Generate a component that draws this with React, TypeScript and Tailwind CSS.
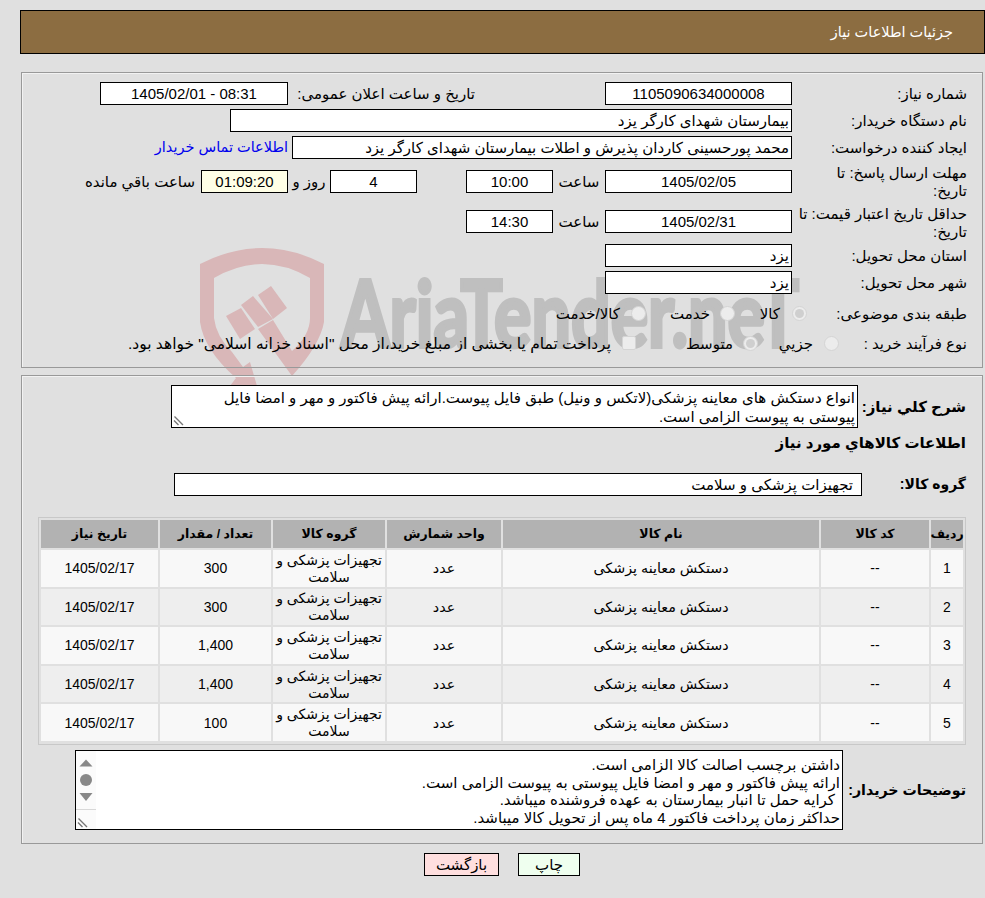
const inputBox = "h-[23px] border border-black bg-white px-2 flex items-center shrink-0";
const cell = "flex items-center justify-center pt-[1px]";

const items = [
  { id: 1, qty: "300" },
  { id: 2, qty: "300" },
  { id: 3, qty: "1,400" },
  { id: 4, qty: "1,400" },
  { id: 5, qty: "100" },
];

const headers = ["ردیف", "کد کالا", "نام کالا", "واحد شمارش", "گروه کالا", "تعداد / مقدار", "تاریخ نیاز"];

const Radio = ({ checked }: { checked?: boolean }) => (
  <span className="w-[15px] h-[15px] rounded-full bg-[#ececec] border border-[#d4d4d4] flex items-center justify-center shrink-0">
    {checked && <span className="w-[9px] h-[9px] rounded-full bg-[#cfcfcf]" />}
  </span>
);

const Watermark = () => (
  <svg dir="ltr" className="absolute left-[190px] top-[240px] pointer-events-none" width="620" height="150" viewBox="190 240 620 150">
    <g fill="#d9b7b8">
      <path d="M200 264 Q262 232 324 264 L324 322 Q320 345 292 376 L258 329 L273 320 L292 351 Q310 335 310 318 L310 278 Q262 250 214 278 L214 318 Q216 336 232 352 L243 367 L250 362 L257 386 L230 386 L236 378 Q204 350 200 322 Z" />
      <path d="M226 316 L241 308 L255 329 L240 339 Z" />
      <path d="M241 305 L253 296 L273 319 L258 327 Z" />
      <path d="M258 295 L271 286 L287 308 L273 319 Z" />
    </g>
    <text x="341" y="347" fontFamily="Lato" fontWeight="700" fontSize="92" fill="#bfbfbf" stroke="#bfbfbf" strokeWidth="4" textAnchor="start" direction="ltr" textLength="458" lengthAdjust="spacingAndGlyphs">
      AriaTender.neT
    </text>
  </svg>
);

const ResizeGrip = () => (
  <svg className="absolute left-[1px] bottom-[1px]" width="11" height="11" viewBox="0 0 11 11" stroke="#777" fill="none">
    <path d="M1.5 1.5 L10 10 M1 5.5 L5.5 10" strokeWidth="1.4" />
  </svg>
);

export default function App() {
  return (
    <div dir="rtl" className="relative min-h-[898px] w-[985px] overflow-hidden bg-[#e0e0e0] font-['Liberation_Sans','DejaVu_Sans',sans-serif] text-[15px] leading-[17px] text-black">
      <Watermark />

      {/* Header */}
      <div className="relative pt-[10px] pl-[20px]">
        <div className="h-[44px] border border-black bg-[#8c6d41] text-white text-[14.5px] flex items-center pr-[31px]">جزئیات اطلاعات نیاز</div>
      </div>

      {/* Main info */}
      <div className="relative mt-[18px] mr-[2px] ml-[21px] h-[296px] border border-[#999] shadow-[inset_1px_1px_0_#f2f2f2] pt-[9px] pr-[15px]">
        <div className="flex h-[27px]">
          <label className="w-[175px] pt-[3px]">شماره نیاز:</label>
          <div className={`${inputBox} w-[187px] justify-center`}>1105090634000008</div>
          <label className="w-[317px] pr-[130px] pt-[3px] shrink-0 whitespace-nowrap">تاریخ و ساعت اعلان عمومی:</label>
          <div dir="ltr" className={`${inputBox} w-[188px] justify-center`}>1405/02/01 - 08:31</div>
        </div>
        <div className="flex h-[27px]">
          <label className="w-[175px] pt-[3px]">نام دستگاه خریدار:</label>
          <div className={`${inputBox} w-[562px] !pr-[2px]`}>بیمارستان شهدای کارگر یزد</div>
        </div>
        <div className="flex h-[34px]">
          <label className="w-[175px] pt-[3px]">ایجاد کننده درخواست:</label>
          <div className={`${inputBox} w-[500px] !pr-[2px]`}>محمد پورحسینی کاردان پذیرش و اطلات بیمارستان شهدای کارگر یزد</div>
          <a className="mr-[4px] pt-[3px] text-[14.5px] text-[#0000ee]">اطلاعات تماس خریدار</a>
        </div>
        <div className="flex h-[40px]">
          <label className="w-[175px] leading-[18px] -mt-[6px] whitespace-nowrap">مهلت ارسال پاسخ: تا<br />تاریخ:</label>
          <div className={`${inputBox} w-[187px] justify-center`}>1405/02/05</div>
          <span className="w-[52px] text-center pt-[3px]">ساعت</span>
          <div className={`${inputBox} w-[87px] justify-center`}>10:00</div>
          <span className="w-[49px]" />
          <div className={`${inputBox} w-[87px] justify-center`}>4</div>
          <span className="w-[42px] text-center pt-[3px]">روز و</span>
          <div className={`${inputBox} w-[87px] justify-center !bg-[#ffffe6]`}>01:09:20</div>
          <span className="mr-[6px] pt-[3px] whitespace-nowrap">ساعت باقي مانده</span>
        </div>
        <div className="flex h-[34px]">
          <label className="w-[175px] leading-[18px] -mt-[5px] whitespace-nowrap">حداقل تاریخ اعتبار قیمت: تا<br />تاریخ:</label>
          <div className={`${inputBox} w-[187px] justify-center`}>1405/02/31</div>
          <span className="w-[52px] text-center pt-[3px]">ساعت</span>
          <div className={`${inputBox} w-[87px] justify-center`}>14:30</div>
        </div>
        <div className="flex h-[27px]">
          <label className="w-[175px] pt-[3px]">استان محل تحویل:</label>
          <div className={`${inputBox} w-[187px] !pr-[2px]`}>یزد</div>
        </div>
        <div className="flex h-[27px]">
          <label className="w-[175px] pt-[3px]">شهر محل تحویل:</label>
          <div className={`${inputBox} w-[187px] !pr-[2px]`}>یزد</div>
        </div>
        <div className="flex h-[30px] items-center">
          <label className="w-[160px]">طبقه بندی موضوعی:</label>
          <Radio checked />
          <span className="w-[57px] pr-[12px]">کالا</span>
          <Radio />
          <span className="w-[74px] pr-[10px]">خدمت</span>
          <Radio />
          <span className="pr-[11px]">کالا/خدمت</span>
        </div>
        <div className="flex h-[30px] items-center">
          <label className="w-[128px]">نوع فرآیند خرید :</label>
          <Radio />
          <span className="w-[66px] pr-[11px]">جزیي</span>
          <Radio checked />
          <span className="w-[107px] pr-[10px]">متوسط</span>
          <span className="w-[14px] h-[14px] rounded-[2px] bg-[#ececec] border border-[#d4d4d4] shrink-0" />
          <span className="pr-[11px] text-[15.5px] whitespace-nowrap">پرداخت تمام یا بخشی از مبلغ خرید،از محل "اسناد خزانه اسلامی" خواهد بود.</span>
        </div>
      </div>

      {/* Description and items */}
      <div className="relative mt-[7px] mr-[2px] ml-[21px] h-[469px] border border-[#999] shadow-[inset_1px_1px_0_#f2f2f2] pt-[9px] pr-[16px]">
        <div className="flex items-center h-[43px]">
          <label className="w-[108px] font-bold">شرح کلي نياز:</label>
          <div className="relative w-[687px] h-[43px] border border-black bg-white pr-[2px] pl-[30px] pt-[2px] leading-[19px] shrink-0">
            انواع دستکش های معاینه پزشکی(لاتکس و ونیل) طبق فایل پیوست.ارائه پیش فاکتور و مهر و امضا فایل پیوستی به پیوست الزامی است.
            <ResizeGrip />
          </div>
        </div>
        <div className="font-bold h-[30px] leading-[30px]">اطلاعات کالاهاي مورد نياز</div>
        <div className="flex items-center h-[23px] mt-[15px]">
          <label className="w-[104px] font-bold text-[14px]">گروه کالا:</label>
          <div className={`${inputBox} w-[688px]`}>تجهیزات پزشکی و سلامت</div>
        </div>

        {/* Items table */}
        <div className="mt-[21px] w-[928px] h-[228px] border border-[#c8c8c8] p-[2px] text-[14.3px]">
          <div className="grid grid-cols-[32px_108px_316px_114px_112px_111px_117px] gap-[2px] grid-rows-[28px_repeat(5,36.6px)]">
            {headers.map((h) => (
              <div key={h} className="bg-[#b2b2b2] font-bold text-[12.5px] flex items-center justify-center whitespace-nowrap">{h}</div>
            ))}
            {items.map((row) => {
              const bg = row.id % 2 === 1 ? "bg-[#f8f8f8]" : "bg-[#eeeeee]";
              return [
                <div key={`${row.id}a`} className={`${bg} ${cell} text-[14px]`}>{row.id}</div>,
                <div key={`${row.id}b`} className={`${bg} ${cell} text-[14px]`}>--</div>,
                <div key={`${row.id}c`} className={`${bg} ${cell}`}>دستکش معاینه پزشکی</div>,
                <div key={`${row.id}d`} className={`${bg} ${cell}`}>عدد</div>,
                <div key={`${row.id}e`} className={`${bg} ${cell} text-[14px] text-center`}>تجهیزات پزشکی و سلامت</div>,
                <div key={`${row.id}f`} className={`${bg} ${cell} text-[14px]`}>{row.qty}</div>,
                <div key={`${row.id}g`} className={`${bg} ${cell} text-[14px]`}>1405/02/17</div>,
              ];
            })}
          </div>
        </div>

        {/* Buyer notes */}
        <div className="flex items-center h-[80px] mt-[5px]">
          <label className="w-[123px] font-bold text-[14.2px]">توضیحات خریدار:</label>
          <div className="relative w-[768px] h-[80px] border border-black bg-white pr-[2px] pt-[5px] leading-[17.5px] shrink-0">
            <div>داشتن برچسب اصالت کالا الزامی است.</div>
            <div>ارائه پیش فاکتور و مهر و امضا فایل پیوستی به پیوست الزامی است.</div>
            <div className="pr-[5px]">کرایه حمل تا انبار بیمارستان به عهده فروشنده میباشد.</div>
            <div>حداکثر زمان پرداخت فاکتور 4 ماه پس از تحویل کالا میباشد.</div>
            <div className="absolute left-0 top-0 bottom-0 w-[20px] bg-[#fbfbfb]">
              <svg width="20" height="58" viewBox="0 0 20 58" fill="#888" className="block">
                <path d="M3.5 15.5 L10 8.5 L16.5 15.5 Z" />
                <circle cx="10" cy="29" r="6" />
                <path d="M3.5 42 L16.5 42 L10 50 Z" />
              </svg>
              <div className="border-t border-[#d8d8d8] absolute left-0 right-0 top-[58px]" />
              <ResizeGrip />
            </div>
          </div>
        </div>
      </div>

      {/* Buttons */}
      <div className="relative flex mt-[9px] pr-[405px] gap-[19px]">
        <button className="w-[62px] h-[23px] border border-black bg-[#efffef] flex items-center justify-center">چاپ</button>
        <button className="w-[75px] h-[23px] border border-black bg-[#ffdfdf] flex items-center justify-center">بازگشت</button>
      </div>
    </div>
  );
}
